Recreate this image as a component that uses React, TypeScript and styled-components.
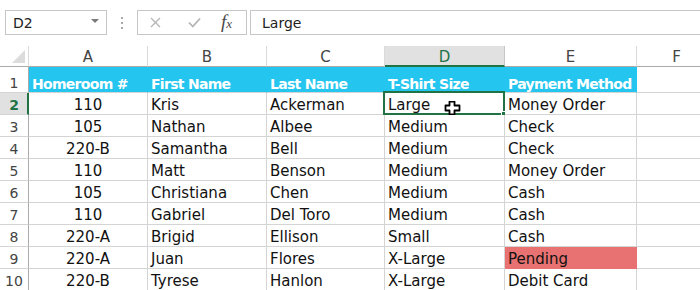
import React from "react";
import styled, { createGlobalStyle, css } from "styled-components";

const Global = createGlobalStyle`
  html, body { margin: 0; padding: 0; background: #fff; }
  body { width: 700px; height: 290px; overflow: hidden; font-family: "DejaVu Sans", sans-serif; }
`;

const Page = styled.div`
  width: 700px;
  height: 290px;
  overflow: hidden;
  background: #fff;
`;

const FormulaBar = styled.div`
  display: flex;
  align-items: stretch;
  height: 25px;
  padding: 10px 0 0 5px;
  margin-bottom: 11px;
`;

const NameBox = styled.div`
  box-sizing: border-box;
  width: 102px;
  border: 1px solid #c6c6c6;
  display: flex;
  align-items: center;
  justify-content: space-between;
  padding: 0 7px 0 7px;
  font-size: 14px;
  color: #222;
`;

const Caret = styled.span`
  width: 0;
  height: 0;
  border-left: 4px solid transparent;
  border-right: 4px solid transparent;
  border-top: 4px solid #7a7a7a;
  margin-top: -3px;
`;

const Dots = styled.div`
  width: 30px;
  display: flex;
  flex-direction: column;
  align-items: center;
  justify-content: center;
  gap: 3px;
  span {
    width: 2px;
    height: 2px;
    background: #a8a8a8;
  }
`;

const FxBox = styled.div`
  box-sizing: border-box;
  width: 110px;
  border: 1px solid #c6c6c6;
  display: flex;
  align-items: center;
  padding-left: 12px;
`;

const IconSlot = styled.div<{ $w: number }>`
  width: ${(p) => p.$w}px;
  display: flex;
  align-items: center;
`;

const Fx = styled.span`
  font-family: "Liberation Serif", serif;
  font-style: italic;
  font-size: 19px;
  line-height: 1;
  color: #4a4a4a;
  margin-left: -3px;
  margin-top: -2px;
  sub {
    font-size: 13px;
    vertical-align: baseline;
  }
`;

const Input = styled.div`
  box-sizing: border-box;
  flex: 1;
  margin-left: 3px;
  margin-right: -20px;
  border: 1px solid #c6c6c6;
  display: flex;
  align-items: center;
  padding-left: 11px;
  font-size: 14px;
  color: #222;
`;

const Grid = styled.div`
  display: grid;
  grid-template-columns: 29px 119px 119px 118px 120px 132px 80px;
  grid-template-rows: 21px 26px repeat(9, 22px);
`;

const Corner = styled.div`
  box-sizing: border-box;
  border-right: 1px solid #dadada;
  border-bottom: 1px solid #ababab;
  position: relative;
  &::after {
    content: "";
    position: absolute;
    right: 3px;
    bottom: 3px;
    width: 0;
    height: 0;
    border-left: 13px solid transparent;
    border-bottom: 13px solid #dcdcdc;
  }
`;

const ColHead = styled.div<{ $active?: boolean }>`
  box-sizing: border-box;
  border-right: 1px solid #dadada;
  border-bottom: 1px solid #ababab;
  display: flex;
  align-items: center;
  justify-content: center;
  font-size: 15px;
  color: #444;
  padding-top: 2px;
  ${(p) =>
    p.$active &&
    css`
      background: #e1e1e1;
      border-bottom: 2px solid #217346;
      border-right-color: #c6c6c6;
      color: #217346;
      padding-top: 3px;
    `}
`;

const RowHead = styled.div<{ $active?: boolean }>`
  box-sizing: border-box;
  border-right: 1px solid #ababab;
  border-bottom: 1px solid #d4d4d4;
  display: flex;
  align-items: flex-end;
  justify-content: center;
  font-size: 14px;
  color: #444;
  padding-bottom: 1px;
  ${(p) =>
    p.$active &&
    css`
      background: #e1e1e1;
      border-right: 2px solid #217346;
      color: #217346;
      font-weight: bold;
      padding-left: 1px;
    `}
`;

const Cell = styled.div<{ $fill?: string; $center?: boolean; $head?: boolean }>`
  box-sizing: border-box;
  position: relative;
  border-right: 1px solid ${(p) => p.$fill || "#d4d4d4"};
  border-bottom: 1px solid ${(p) => p.$fill || "#d4d4d4"};
  background: ${(p) => p.$fill || "#fff"};
  display: flex;
  align-items: flex-end;
  justify-content: ${(p) => (p.$center ? "center" : "flex-start")};
  padding: 0 3px 0 3px;
  font-size: 15px;
  color: #111;
  white-space: nowrap;
  ${(p) =>
    p.$head &&
    css`
      font-weight: bold;
      color: #fff;
      font-size: 14px;
      letter-spacing: -0.7px;
      padding-bottom: 0;
      border-bottom-color: #d4d4d4;
    `}
`;

const Selection = styled.div`
  position: absolute;
  left: -2px;
  top: -2px;
  right: -1px;
  bottom: -1px;
  border: 2px solid #217346;
  pointer-events: none;
  &::after {
    content: "";
    position: absolute;
    right: -5px;
    bottom: -5px;
    width: 6px;
    height: 6px;
    background: #217346;
    border: 1px solid #fff;
    border-right: none;
    border-bottom: none;
  }
`;

const Cursor = styled.svg`
  position: absolute;
  left: 59px;
  top: 8px;
`;

const BLUE = "#24c5ee";
const PINK = "#e87272";

const cols = ["A", "B", "C", "D", "E", "F"];
const header = ["Homeroom #", "First Name", "Last Name", "T-Shirt Size", "Payment Method"];
const rows: string[][] = [
  ["110", "Kris", "Ackerman", "Large", "Money Order"],
  ["105", "Nathan", "Albee", "Medium", "Check"],
  ["220-B", "Samantha", "Bell", "Medium", "Check"],
  ["110", "Matt", "Benson", "Medium", "Money Order"],
  ["105", "Christiana", "Chen", "Medium", "Cash"],
  ["110", "Gabriel", "Del Toro", "Medium", "Cash"],
  ["220-A", "Brigid", "Ellison", "Small", "Cash"],
  ["220-A", "Juan", "Flores", "X-Large", "Pending"],
  ["220-B", "Tyrese", "Hanlon", "X-Large", "Debit Card"],
];

export default function App() {
  return (
    <Page>
      <Global />
      <FormulaBar>
        <NameBox>
          <span>D2</span>
          <Caret />
        </NameBox>
        <Dots>
          <span />
          <span />
          <span />
        </Dots>
        <FxBox>
          <IconSlot $w={38}>
            <svg width="11" height="11" viewBox="0 0 11 11">
              <path d="M1 1 L10 10 M10 1 L1 10" stroke="#b4b4b4" strokeWidth="1.3" fill="none" />
            </svg>
          </IconSlot>
          <IconSlot $w={36}>
            <svg width="13" height="11" viewBox="0 0 13 11">
              <path d="M1 5.5 L4.8 9.5 L12 1.5" stroke="#b4b4b4" strokeWidth="1.8" fill="none" />
            </svg>
          </IconSlot>
          <Fx>
            f<sub>x</sub>
          </Fx>
        </FxBox>
        <Input>Large</Input>
      </FormulaBar>
      <Grid>
        <Corner />
        {cols.map((c) => (
          <ColHead key={c} $active={c === "D"}>
            {c}
          </ColHead>
        ))}
        <RowHead>1</RowHead>
        {header.map((h) => (
          <Cell key={h} $fill={BLUE} $head>
            {h}
          </Cell>
        ))}
        <Cell />
        {rows.map((r, i) => (
          <React.Fragment key={i}>
            <RowHead $active={i === 0}>{i + 2}</RowHead>
            {r.map((v, j) => (
              <Cell
                key={j}
                $center={j === 0}
                $fill={v === "Pending" ? PINK : undefined}
              >
                {v}
                {i === 0 && j === 3 && (
                  <>
                    <Selection />
                    <Cursor width="17" height="15" viewBox="0 0 17 15">
                      <path
                        d="M5.5 0.5 H10.5 V4.5 H15.5 V9.5 H10.5 V13.5 H5.5 V9.5 H1.5 V4.5 H5.5 Z"
                        fill="#fff"
                        stroke="#000"
                        strokeWidth="1.8"
                        strokeLinejoin="round"
                      />
                    </Cursor>
                  </>
                )}
              </Cell>
            ))}
            <Cell />
          </React.Fragment>
        ))}
      </Grid>
    </Page>
  );
}
